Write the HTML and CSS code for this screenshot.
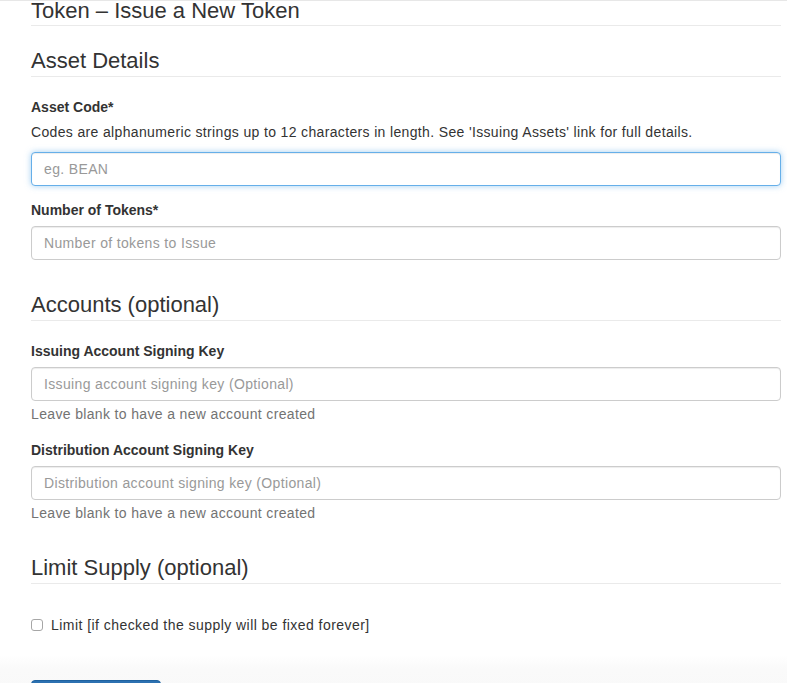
FILE: index.html
```html
<!DOCTYPE html>
<html lang="en">
<head>
<meta charset="utf-8">
<title>Token – Issue a New Token</title>
<link rel="stylesheet" href="styles.css">
</head>
<body>
<div class="topbar"></div>
<main class="page">
  <h1 class="page-title">Token – Issue a New Token</h1>

  <section class="section">
    <h2 class="section-title section-title--first">Asset Details</h2>
    <div class="field">
      <label class="field-label" for="code">Asset Code*</label>
      <p class="field-intro">Codes are alphanumeric strings up to 12 characters in length. See 'Issuing Assets' link for full details.</p>
      <input id="code" class="input is-focused" type="text" placeholder="eg. BEAN">
    </div>
    <div class="field">
      <label class="field-label" for="amount">Number of Tokens*</label>
      <input id="amount" class="input" type="text" placeholder="Number of tokens to Issue">
    </div>
  </section>

  <section class="section section--accounts">
    <h2 class="section-title">Accounts (optional)</h2>
    <div class="field">
      <label class="field-label" for="issuing">Issuing Account Signing Key</label>
      <input id="issuing" class="input" type="text" placeholder="Issuing account signing key (Optional)">
      <p class="field-help">Leave blank to have a new account created</p>
    </div>
    <div class="field">
      <label class="field-label" for="dist">Distribution Account Signing Key</label>
      <input id="dist" class="input" type="text" placeholder="Distribution account signing key (Optional)">
      <p class="field-help">Leave blank to have a new account created</p>
    </div>
  </section>

  <section class="section">
    <h2 class="section-title">Limit Supply (optional)</h2>
    <label class="check">
      <input class="check-box" type="checkbox">
      <span class="check-text">Limit [if checked the supply will be fixed forever]</span>
    </label>
  </section>
</main>
<div class="actions">
  <button class="btn-primary" type="button">Issue Token</button>
</div>
</body>
</html>
```

FILE: styles.css
```css
html, body {
  margin: 0;
  padding: 0;
  overflow: hidden;
  background: #fff;
}

body {
  font-family: "Liberation Sans", Arial, Helvetica, sans-serif;
  font-size: 14px;
  line-height: 20px;
  color: #333;
  letter-spacing: 0.35px;
}

.topbar {
  height: 0;
  border-bottom: 1px solid #e7e7e7;
}

.page {
  padding: 0 6px 0 31px;
}

.page-title {
  margin: -3px 0 0;
  padding-bottom: 1px;
  font-size: 22px;
  line-height: 26px;
  font-weight: 400;
  letter-spacing: 0;
  border-bottom: 1px solid #eaeaea;
}

.section-title {
  margin: 32px 0 20px;
  padding-bottom: 2px;
  font-size: 22px;
  line-height: 26px;
  font-weight: 400;
  letter-spacing: 0;
  border-bottom: 1px solid #eaeaea;
}

.section-title--first {
  margin-top: 22px;
}

.field {
  margin-top: 14px;
}

.section--accounts .field + .field {
  margin-top: 16px;
}

.field-label {
  display: block;
  margin-bottom: 6px;
  font-weight: 700;
  font-size: 14px;
  line-height: 20px;
  letter-spacing: 0;
}

.field-intro {
  margin: -1px 0 10px;
}

.field-help {
  margin: 3px 0 0;
  color: #737373;
}

.input {
  display: block;
  box-sizing: border-box;
  width: 100%;
  height: 34px;
  margin: 0;
  padding: 6px 12px;
  font-family: inherit;
  font-size: 14px;
  line-height: 20px;
  letter-spacing: 0.35px;
  color: #555;
  background: #fff;
  border: 1px solid #ccc;
  border-radius: 4px;
  box-shadow: inset 0 1px 1px rgba(0, 0, 0, 0.075);
  outline: none;
}

.input::placeholder {
  color: #999;
}

.input.is-focused {
  border-color: #66afe9;
  box-shadow: inset 0 1px 1px rgba(0, 0, 0, 0.075), 0 0 6px rgba(102, 175, 233, 0.6);
}

.check {
  display: flex;
  align-items: center;
  margin-top: 31px;
  line-height: 20px;
}

.check-text {
  letter-spacing: 0.45px;
}

.check-box {
  appearance: none;
  -webkit-appearance: none;
  box-sizing: border-box;
  width: 12px;
  height: 12px;
  margin: 0 8px 0 0;
  border: 1px solid #a6a6a6;
  border-radius: 3px;
  background: #fff;
}

.actions {
  margin-top: 20px;
  padding: 25px 0 0 31px;
  background: linear-gradient(#ffffff 0px, #fafafa 14px, #f8f8f8 100%);
}

.btn-primary {
  display: block;
  width: 130px;
  height: 34px;
  padding: 6px 12px;
  font-family: inherit;
  font-size: 14px;
  color: #fff;
  background: #2c71b1;
  border: 1px solid #1f62a0;
  border-radius: 4px;
}
```
